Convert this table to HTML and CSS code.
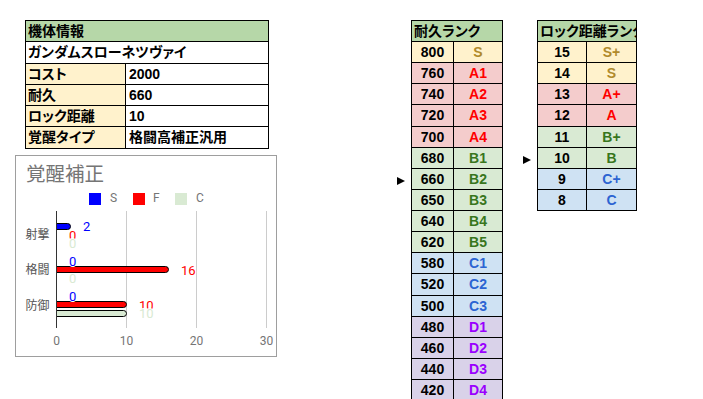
FILE: index.html
```html
<!DOCTYPE html>
<html lang="ja">
<head>
<meta charset="utf-8">
<title>機体情報</title>
<link rel="stylesheet" href="styles.css">
</head>
<body>
<div class="page">
  <div class="left">
    <div class="info">
      <div class="cell head span2">機体情報</div>
      <div class="cell span2">ガンダムスローネツヴァイ</div>
      <div class="cell label">コスト</div><div class="cell">2000</div>
      <div class="cell label">耐久</div><div class="cell">660</div>
      <div class="cell label">ロック距離</div><div class="cell">10</div>
      <div class="cell label">覚醒タイプ</div><div class="cell">格闘高補正汎用</div>
    </div>
    <div class="chart">
      <svg width="260" height="200" viewBox="0 0 260 200">
        <text class="c-title" x="10" y="25">覚醒補正</text>
        <rect x="73" y="37" width="12" height="12" fill="#0000ff"/>
        <text class="c-legend" x="94" y="46">S</text>
        <rect x="117" y="37" width="12" height="12" fill="#ff0000"/>
        <text class="c-legend" x="137" y="46">F</text>
        <rect x="159" y="37" width="12" height="12" fill="#d9ead3"/>
        <text class="c-legend" x="180" y="46">C</text>

        <line x1="110.5" y1="55" x2="110.5" y2="172" class="c-grid"/>
        <line x1="180.5" y1="55" x2="180.5" y2="172" class="c-grid"/>
        <line x1="250.5" y1="55" x2="250.5" y2="172" class="c-grid"/>

        <path d="M40.5,67.5 H51.5 A3,3 0 0 1 54.5,70.5 V70.5 A3,3 0 0 1 51.5,73.5 H40.5 Z" fill="#0000ff" class="c-bar"/>
        <path d="M40.5,110.5 H149.5 A3,3 0 0 1 152.5,113.5 V113.5 A3,3 0 0 1 149.5,116.5 H40.5 Z" fill="#ff0000" class="c-bar"/>
        <path d="M40.5,145.5 H107.5 A3,3 0 0 1 110.5,148.5 V148.5 A3,3 0 0 1 107.5,151.5 H40.5 Z" fill="#ff0000" class="c-bar"/>
        <path d="M40.5,154.5 H107.5 A3,3 0 0 1 110.5,157.5 V157.5 A3,3 0 0 1 107.5,160.5 H40.5 Z" fill="#d9ead3" class="c-bar"/>

        <line x1="40.5" y1="55" x2="40.5" y2="172" class="c-axis"/>

        <text class="c-val s" x="67" y="75.2">2</text>
        <text class="c-val f" x="53" y="83.5">0</text>
        <text class="c-val c" x="53" y="91.8">0</text>
        <text class="c-val s" x="53" y="110.2">0</text>
        <text class="c-val f" x="165" y="118.5">16</text>
        <text class="c-val c" x="53" y="126.8">0</text>
        <text class="c-val s" x="53" y="145.2">0</text>
        <text class="c-val f" x="123" y="153.5">10</text>
        <text class="c-val c" x="123" y="161.8">10</text>

        <text class="c-cat" x="33.5" y="82.5">射撃</text>
        <text class="c-cat" x="33.5" y="118">格闘</text>
        <text class="c-cat" x="33.5" y="153.5">防御</text>

        <text class="c-tick" x="40.5" y="189">0</text>
        <text class="c-tick" x="110.5" y="189">10</text>
        <text class="c-tick" x="180.5" y="189">20</text>
        <text class="c-tick" x="250.5" y="189">30</text>
      </svg>
    </div>
  </div>

  <div class="rank rank-hp">
    <div class="mark"></div><div class="cell head span2 edge">耐久ランク</div>
    <div class="mark"></div><div class="cell num bg-y">800</div><div class="cell grade bg-y g-s">S</div>
    <div class="mark"></div><div class="cell num bg-r">760</div><div class="cell grade bg-r g-a">A1</div>
    <div class="mark"></div><div class="cell num bg-r">740</div><div class="cell grade bg-r g-a">A2</div>
    <div class="mark"></div><div class="cell num bg-r">720</div><div class="cell grade bg-r g-a">A3</div>
    <div class="mark"></div><div class="cell num bg-r">700</div><div class="cell grade bg-r g-a">A4</div>
    <div class="mark"></div><div class="cell num bg-g">680</div><div class="cell grade bg-g g-b">B1</div>
    <div class="mark"><span class="arrow"></span></div><div class="cell num bg-g">660</div><div class="cell grade bg-g g-b">B2</div>
    <div class="mark"></div><div class="cell num bg-g">650</div><div class="cell grade bg-g g-b">B3</div>
    <div class="mark"></div><div class="cell num bg-g">640</div><div class="cell grade bg-g g-b">B4</div>
    <div class="mark"></div><div class="cell num bg-g">620</div><div class="cell grade bg-g g-b">B5</div>
    <div class="mark"></div><div class="cell num bg-b">580</div><div class="cell grade bg-b g-c">C1</div>
    <div class="mark"></div><div class="cell num bg-b">520</div><div class="cell grade bg-b g-c">C2</div>
    <div class="mark"></div><div class="cell num bg-b">500</div><div class="cell grade bg-b g-c">C3</div>
    <div class="mark"></div><div class="cell num bg-p">480</div><div class="cell grade bg-p g-d">D1</div>
    <div class="mark"></div><div class="cell num bg-p">460</div><div class="cell grade bg-p g-d">D2</div>
    <div class="mark"></div><div class="cell num bg-p">440</div><div class="cell grade bg-p g-d">D3</div>
    <div class="mark"></div><div class="cell num bg-p">420</div><div class="cell grade bg-p g-d">D4</div>
  </div>

  <div class="rank rank-lock">
    <div class="mark"></div><div class="cell head span2 edge">ロック距離ランク</div>
    <div class="mark"></div><div class="cell num bg-y">15</div><div class="cell grade bg-y g-s">S+</div>
    <div class="mark"></div><div class="cell num bg-y">14</div><div class="cell grade bg-y g-s">S</div>
    <div class="mark"></div><div class="cell num bg-r">13</div><div class="cell grade bg-r g-a">A+</div>
    <div class="mark"></div><div class="cell num bg-r">12</div><div class="cell grade bg-r g-a">A</div>
    <div class="mark"></div><div class="cell num bg-g">11</div><div class="cell grade bg-g g-b">B+</div>
    <div class="mark"><span class="arrow"></span></div><div class="cell num bg-g">10</div><div class="cell grade bg-g g-b">B</div>
    <div class="mark"></div><div class="cell num bg-b">9</div><div class="cell grade bg-b g-c">C+</div>
    <div class="mark"></div><div class="cell num bg-b">8</div><div class="cell grade bg-b g-c">C</div>
  </div>
</div>
</body>
</html>
```

FILE: styles.css
```css
html, body {
  margin: 0;
  padding: 0;
  overflow: hidden;
  background: #ffffff;
}

body {
  font-family: "Liberation Sans", "Noto Sans CJK JP", sans-serif;
  font-size: 14px;
  font-weight: 700;
  color: #000;
  font-feature-settings: "palt";
}

.page {
  display: flex;
  align-items: flex-start;
  padding-top: 20px;
}

.left {
  margin-left: 15px;
  width: 262px;
  display: flex;
  flex-direction: column;
}

.info {
  margin-left: 10px;
  display: grid;
  grid-template-columns: 100px 143px;
  border-left: 1px solid #000;
  border-top: 1px solid #000;
  width: max-content;
}

.cell {
  box-sizing: border-box;
  height: 21px;
  line-height: 20px;
  border-right: 1px solid #000;
  border-bottom: 1px solid #000;
  padding-left: 2px;
  white-space: nowrap;
  overflow: hidden;
  background: #ffffff;
}

.info .cell { height: 21.3px; }

.info .cell:nth-child(2n+4) { padding-left: 3px; }

.span2 { grid-column: span 2; }

.head { background: #b6d7a8; }
.label { background: #fff2cc; }

.chart {
  margin-top: 6px;
  width: 262px;
  height: 202px;
  box-sizing: border-box;
  border: 1px solid #9e9e9e;
  background: #fff;
}

.chart svg { display: block; }

.c-title {
  font-family: "Noto Sans CJK JP", sans-serif;
  font-weight: 400;
  font-size: 19.5px;
  fill: #757575;
}

.c-legend, .c-tick {
  font-family: Roboto, "Liberation Sans", sans-serif;
  font-weight: 400;
  font-size: 12px;
  fill: #757575;
}

.c-tick { text-anchor: middle; }

.c-cat {
  font-family: "Noto Sans CJK JP", sans-serif;
  font-weight: 400;
  font-size: 12px;
  fill: #555555;
  text-anchor: end;
}

.c-grid { stroke: #cccccc; stroke-width: 1; }
.c-axis { stroke: #333333; stroke-width: 1; }
.c-bar { stroke: #000000; stroke-width: 1; }

.c-val {
  font-family: Roboto, "Liberation Sans", sans-serif;
  font-weight: 400;
  font-size: 13px;
  paint-order: stroke;
  stroke: #ffffff;
  stroke-width: 2px;
}
.c-val.s { fill: #0000ff; }
.c-val.f { fill: #ff0000; }
.c-val.c { fill: #d9ead3; }

.rank {
  display: grid;
}

.rank .cell, .rank .mark { height: 21.125px; }

.rank-hp {
  margin-left: 120px;
  grid-template-columns: 14px 43px 49px;
}

.rank-lock {
  margin-left: 20px;
  grid-template-columns: 14px 50px 50px;
}

.rank .head {
  height: 22px;
  border-top: 1px solid #000;
  line-height: 20px;
}

.edge { border-left: 1px solid #000; }

.num {
  border-left: 1px solid #000;
  text-align: center;
  padding-left: 0;
}

.grade {
  text-align: center;
  padding-left: 0;
}

.mark {
  box-sizing: border-box;
  padding-top: 8px;
}

.arrow {
  display: block;
  width: 0;
  height: 0;
  border-left: 8px solid #000;
  border-top: 4.5px solid transparent;
  border-bottom: 4.5px solid transparent;
}

.bg-y { background: #fff2cc; }
.bg-r { background: #f4cccc; }
.bg-g { background: #d9ead3; }
.bg-b { background: #cfe2f3; }
.bg-p { background: #d9d2e9; }

.g-s { color: #b08a2b; }
.g-a { color: #ff0000; }
.g-b { color: #38761d; }
.g-c { color: #2c64d2; }
.g-d { color: #9900ff; }
```
